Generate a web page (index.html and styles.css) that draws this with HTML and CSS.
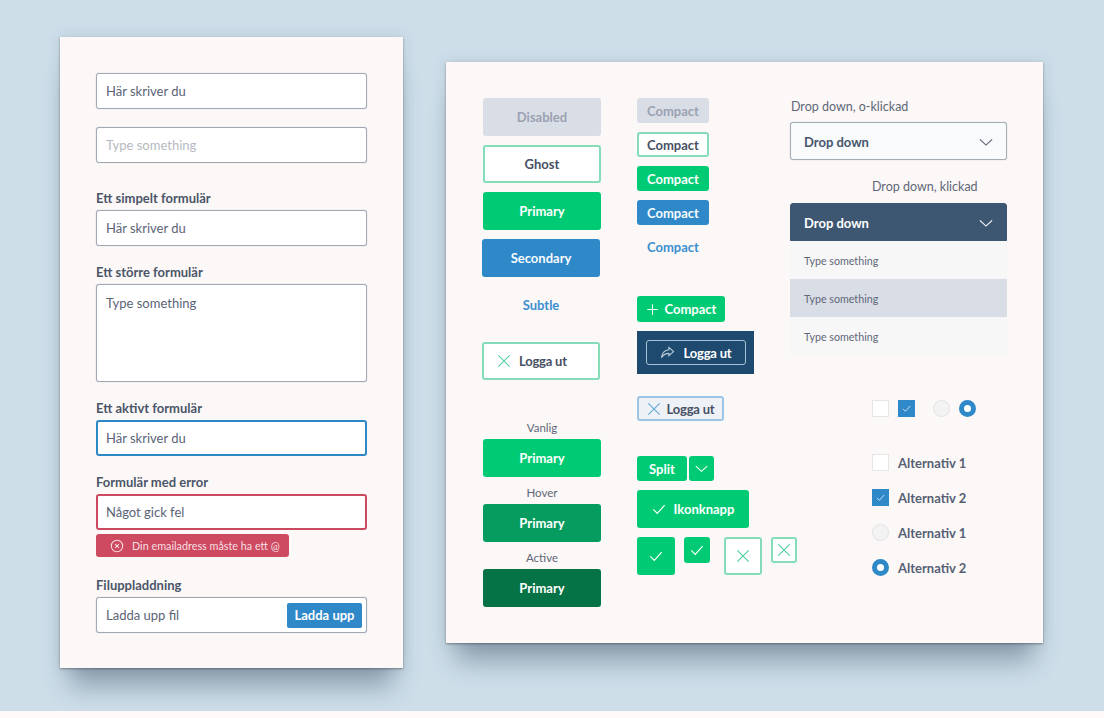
FILE: index.html
```html
<!DOCTYPE html>
<html lang="sv">
<head>
<meta charset="utf-8">
<title>Formulär och knappar</title>
<link rel="stylesheet" href="styles.css">
</head>
<body>
<svg class="defs" width="0" height="0">
    <symbol id="ikon-x" viewBox="0 0 16 16"><path d="M1.5 1.5l13 13M14.5 1.5l-13 13"/></symbol>
    <symbol id="ikon-check" viewBox="0 0 16 16"><path d="M1.5 8.5l4.5 4.5 8.5-9.5"/></symbol>
    <symbol id="ikon-pil" viewBox="0 0 16 16"><path d="M1 8l7 6.5L15 8" transform="translate(0 -3)"/></symbol>
    <symbol id="ikon-plus" viewBox="0 0 16 16"><path d="M8 1.5v13M1.5 8h13"/></symbol>
</svg>
<main class="yta">
    <section class="kort kortFormular">
        <div class="falt">Här skriver du</div>
        <div class="falt faltTomt">Type something</div>
        <p class="etikett etikettForsta">Ett simpelt formulär</p>
        <div class="falt">Här skriver du</div>
        <p class="etikett">Ett större formulär</p>
        <div class="falt faltStort">Type something</div>
        <p class="etikett">Ett aktivt formulär</p>
        <div class="falt faltAktivt">Här skriver du</div>
        <p class="etikett">Formulär med error</p>
        <div class="falt faltError">Något gick fel</div>
        <div class="felruta">
            <svg class="felikon" viewBox="0 0 16 16"><circle cx="8" cy="8" r="6.5"/><path d="M5.8 5.8l4.4 4.4M10.2 5.8l-4.4 4.4"/></svg>
            Din emailadress måste ha ett @
        </div>
        <p class="etikett etikettFil">Filuppladdning</p>
        <div class="falt faltFil">Ladda upp fil<span class="knappFil">Ladda upp</span></div>
    </section>

    <section class="kort kortKnappar">
        <div class="kolumn kolumnStora">
            <div class="knapp stor disabled">Disabled</div>
            <div class="knapp stor ghost">Ghost</div>
            <div class="knapp stor primary">Primary</div>
            <div class="knapp stor secondary vanster">Secondary</div>
            <div class="knapp subtle subtleStor vanster">Subtle</div>
            <div class="knapp stor ghost vanster loggaStor"><svg class="ikon ikonGron"><use href="#ikon-x"/></svg>Logga ut</div>
            <p class="rubrik rubrikVanlig">Vanlig</p>
            <div class="knapp stor primary">Primary</div>
            <p class="rubrik">Hover</p>
            <div class="knapp stor hover">Primary</div>
            <p class="rubrik">Active</p>
            <div class="knapp stor active">Primary</div>
        </div>

        <div class="kolumn kolumnKompakta">
            <div class="knapp kompakt disabled">Compact</div>
            <div class="knapp kompakt ghost">Compact</div>
            <div class="knapp kompakt primary">Compact</div>
            <div class="knapp kompakt secondary">Compact</div>
            <div class="knapp kompakt subtle">Compact</div>
            <div class="knapp kompakt primary plus"><svg class="ikon ikonVit"><use href="#ikon-plus"/></svg>Compact</div>
            <div class="morkRuta">
                <div class="knapp morkKnapp">
                    <svg class="ikonDela" viewBox="0 0 16 14"><path d="M9.5 1.5l5 4.5-5 4.5V8C6 8 3.5 9.5 1.5 12.5 2 8 4.5 4.5 9.5 4z"/></svg>Logga ut
                </div>
            </div>
            <div class="knapp ljusKnapp"><svg class="ikon ikonBla"><use href="#ikon-x"/></svg>Logga ut</div>
            <div class="split">
                <div class="knapp kompakt primary splitText">Split</div>
                <div class="knapp kompakt primary splitPil"><svg class="ikon ikonVit ikonLiten"><use href="#ikon-pil"/></svg></div>
            </div>
            <div class="knapp primary ikonknapp"><svg class="ikon ikonVit"><use href="#ikon-check"/></svg>Ikonknapp</div>
            <div class="ikonRad">
                <div class="knapp primary kvadrat"><svg class="ikon ikonVit"><use href="#ikon-check"/></svg></div>
                <div class="knapp primary kvadratLiten"><svg class="ikon ikonVit"><use href="#ikon-check"/></svg></div>
                <div class="knapp ghost kvadrat kvadratX"><svg class="ikon ikonGron"><use href="#ikon-x"/></svg></div>
                <div class="knapp ghost kvadratLiten"><svg class="ikon ikonGron"><use href="#ikon-x"/></svg></div>
            </div>
        </div>

        <div class="kolumn kolumnVal">
            <p class="rubrikDrop">Drop down, o-klickad</p>
            <div class="drop">Drop down<svg class="ikon ikonMork"><use href="#ikon-pil"/></svg></div>
            <p class="rubrikDrop rubrikKlickad">Drop down, klickad</p>
            <div class="drop dropOppen">Drop down<svg class="ikon ikonVit"><use href="#ikon-pil"/></svg></div>
            <ul class="lista">
                <li>Type something</li>
                <li class="vald">Type something</li>
                <li>Type something</li>
            </ul>
            <div class="kontroller">
                <span class="ruta"></span>
                <span class="ruta rutaVald"><svg class="ikon ikonVit ikonRuta"><use href="#ikon-check"/></svg></span>
                <span class="radio radioForsta"></span>
                <span class="radio radioVald"></span>
            </div>
            <div class="alternativ alternativForsta"><span class="ruta"></span>Alternativ 1</div>
            <div class="alternativ"><span class="ruta rutaVald"><svg class="ikon ikonVit ikonRuta"><use href="#ikon-check"/></svg></span>Alternativ 2</div>
            <div class="alternativ"><span class="radio"></span>Alternativ 1</div>
            <div class="alternativ"><span class="radio radioVald"></span>Alternativ 2</div>
        </div>
    </section>
</main>
</body>
</html>
```
FILE: styles.css
```css
* {
    box-sizing: border-box;
    margin: 0;
    padding: 0;
}
body {
    width: 1104px;
    height: 718px;
    overflow: hidden;
    background-color: #fdf9f8;
    font-family: Lato, "Open Sans", sans-serif;
    color: #4b5568;
}
.defs {
    display: block;
}
.yta {
    display: flex;
    align-items: flex-start;
    height: 711px;
    padding-left: 60px;
    background-color: #cddee9;
    overflow: hidden;
}
.kort {
    background-color: #fcf8f7;
    box-shadow: 0 0 12px rgba(60, 90, 120, 0.16), 0 1px 2px rgba(60, 60, 70, 0.5), 0 28px 24px -10px rgba(50, 70, 90, 0.42);
}

/* vanster kort */
.kortFormular {
    width: 343px;
    height: 631px;
    margin-top: 37px;
    padding: 36px 36px 0;
}
.falt {
    display: flex;
    align-items: center;
    justify-content: space-between;
    width: 271px;
    height: 36px;
    padding-left: 9px;
    background-color: #fff;
    border: 1px solid #a3a8b7;
    border-radius: 3px;
    box-shadow: 0 0 1px #a3a8b7;
    font-size: 13px;
    color: #5a6376;
}
.faltTomt {
    margin-top: 18px;
    color: #b5b9c2;
}
.faltStort {
    height: 98px;
    align-items: flex-start;
    padding-top: 10px;
}
.faltAktivt {
    border: 2px solid #2f88c6;
    box-shadow: none;
    padding-left: 8px;
}
.faltError {
    border: 2px solid #cc4a5f;
    box-shadow: none;
    padding-left: 8px;
}
.etikett {
    height: 17px;
    margin: 17px 0 4px;
    font-size: 13px;
    line-height: 18px;
    font-weight: 700;
}
.etikettForsta {
    margin-top: 26px;
}
.etikettFil {
    margin-top: 19px;
}
.felruta {
    display: flex;
    align-items: center;
    width: 193px;
    height: 23px;
    margin-top: 4px;
    padding-left: 14px;
    background-color: #cd4a60;
    border-radius: 3px;
    font-size: 10.8px;
    white-space: nowrap;
    color: #f6dfe2;
}
.felikon {
    width: 14px;
    height: 14px;
    margin-right: 8px;
    fill: none;
    stroke: #f6dfe2;
    stroke-width: 1.2;
}
.faltFil {
    padding-right: 4px;
}
.knappFil {
    width: 75px;
    height: 25px;
    background-color: #2f88c8;
    border-radius: 2px;
    font-size: 13px;
    line-height: 25px;
    font-weight: 700;
    text-align: center;
    color: #fff;
}

/* hoger kort */
.kortKnappar {
    display: flex;
    width: 597px;
    height: 581px;
    margin: 62px 0 0 43px;
    padding: 36px 0 0 37px;
}
.kolumn {
    display: flex;
    flex-direction: column;
    align-items: flex-start;
}
.kolumnStora {
    width: 154px;
}
.kolumnKompakta {
    width: 153px;
}
.kolumnVal {
    width: 217px;
}
.knapp {
    display: flex;
    align-items: center;
    justify-content: center;
    font-weight: 700;
    font-size: 13px;
    border-radius: 3px;
    flex-shrink: 0;
}
.stor {
    width: 118px;
    height: 38px;
    margin-bottom: 9px;
}
.kompakt {
    width: 72px;
    height: 25px;
    margin-bottom: 9px;
}
.disabled {
    background-color: #d9dde6;
    color: #9ba2b2;
}
.ghost {
    background-color: #fff;
    border: 2px solid #84dcb9;
    color: #475064;
}
.primary {
    background-color: #00cb74;
    color: #fdfffe;
}
.secondary {
    background-color: #2f88c8;
    color: #f6fbff;
}
.subtle {
    color: #3b8fd0;
}
.hover {
    background-color: #069c5f;
    color: #fff;
    margin-bottom: 0;
}
.active {
    background-color: #057345;
    color: #fff;
    margin-bottom: 0;
}
.vanster {
    margin-left: -1px;
}
.subtleStor {
    width: 118px;
    height: 20px;
    margin-top: 9px;
}
.loggaStor {
    justify-content: flex-start;
    margin-top: 27px;
    margin-bottom: 0;
    padding-left: 13px;
    letter-spacing: -0.2px;
}
.rubrik {
    width: 118px;
    height: 16px;
    margin: 8px 0 3px;
    text-align: center;
    font-size: 11.5px;
    line-height: 16px;
    color: #5f6778;
}
.rubrikVanlig {
    margin-top: 40px;
}
.kolumn .primary.stor:has(+ .rubrik) {
    margin-bottom: 0;
}
.ikon {
    width: 14px;
    height: 14px;
    margin-right: 8px;
    fill: none;
    stroke-width: 1.3;
    flex-shrink: 0;
}
.ikonVit { stroke: #fff; }
.ikonGron { stroke: #4fcf9d; }
.ikonBla { stroke: #64a8d8; }
.ikonMork { stroke: #566072; }
.plus {
    width: 88px;
    height: 26px;
    margin: 28px 0 9px;
}
.plus .ikon {
    width: 13px;
    height: 13px;
    margin-right: 6px;
}
.morkRuta {
    display: flex;
    align-items: center;
    justify-content: center;
    width: 117px;
    height: 43px;
    background-color: #1d4a6e;
}
.morkKnapp {
    width: 100px;
    height: 25px;
    border: 1px solid #aac2d4;
    letter-spacing: -0.2px;
    color: #fff;
}
.ikonDela {
    width: 15px;
    height: 13px;
    margin-right: 9px;
    fill: none;
    stroke: #b6cad9;
    stroke-width: 1.2;
}
.ljusKnapp {
    width: 87px;
    height: 25px;
    margin-top: 22px;
    background-color: #eef2f7;
    border: 2px solid #9cc5e5;
    letter-spacing: -0.2px;
    color: #475064;
}
.ljusKnapp .ikon {
    margin-right: 6px;
}
.split {
    display: flex;
    gap: 2px;
    margin-top: 35px;
}
.splitText {
    width: 50px;
    margin-bottom: 0;
}
.splitPil {
    width: 25px;
    margin-bottom: 0;
}
.ikonLiten {
    width: 13px;
    height: 13px;
    margin-right: 0;
}
.ikonknapp {
    width: 112px;
    height: 38px;
    margin-top: 9px;
}
.ikonRad {
    display: flex;
    align-items: flex-start;
    gap: 9px;
    margin-top: 9px;
}
.ikonRad .ikon {
    margin-right: 0;
}
.kvadrat {
    width: 38px;
    height: 38px;
}
.kvadratX {
    margin-left: 5px;
}
.kvadratLiten {
    width: 26px;
    height: 26px;
}

/* dropdowns */
.rubrikDrop {
    height: 16px;
    margin: 1px 0 7px 1px;
    font-size: 12.5px;
    line-height: 16px;
    color: #5f6778;
}
.rubrikKlickad {
    margin: 19px 0 8px 82px;
}
.drop {
    display: flex;
    align-items: center;
    justify-content: space-between;
    width: 217px;
    height: 38px;
    padding: 1px 13px 0;
    background-color: #f8fafb;
    border: 1px solid #a4adb6;
    border-radius: 3px;
    box-shadow: 0 0 1px #a4adb6;
    font-size: 13px;
    font-weight: 700;
    color: #46566c;
}
.drop .ikon {
    margin-right: 0;
}
.dropOppen {
    background-color: #3d5672;
    border-color: #3d5672;
    box-shadow: none;
    border-radius: 3px 3px 0 0;
    color: #fdfeff;
}
.lista {
    width: 217px;
    list-style: none;
}
.lista li {
    height: 38px;
    padding-left: 14px;
    background-color: #f7f7f7;
    font-size: 10.7px;
    line-height: 40px;
    color: #5f6778;
}
.lista .vald {
    background-color: #d9dde6;
}
.kontroller {
    display: flex;
    gap: 9px;
    margin: 45px 0 0 82px;
}
.ruta {
    display: flex;
    align-items: center;
    justify-content: center;
    width: 17px;
    height: 17px;
    background-color: #fff;
    border: 1px solid #e6e6e8;
    flex-shrink: 0;
}
.rutaVald {
    background-color: #2f88c8;
    border-color: #2f88c8;
}
.ikonRuta {
    width: 9px;
    height: 9px;
    margin-right: 0;
}
.radio {
    width: 17px;
    height: 17px;
    background-color: #f3f3f3;
    border: 1px solid #e2e2e4;
    border-radius: 50%;
    flex-shrink: 0;
}
.radioForsta {
    margin-left: 9px;
}
.radioVald {
    background-color: #fff;
    border: 5px solid #2f88c8;
}
.alternativ {
    display: flex;
    align-items: flex-start;
    gap: 9px;
    height: 17px;
    margin: 18px 0 0 82px;
    font-size: 13px;
    line-height: 19px;
    font-weight: 700;
    color: #566075;
}
.alternativForsta {
    margin-top: 37px;
}
```
